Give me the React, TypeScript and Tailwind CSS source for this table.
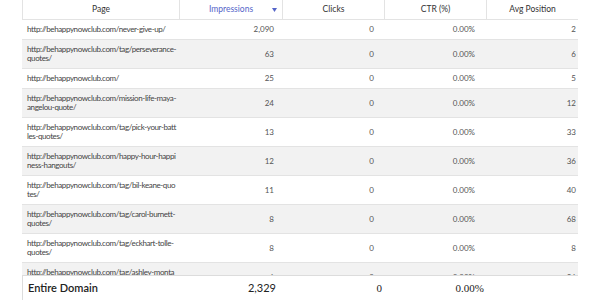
import React from 'react';

type Row = { page: string; impressions: string; clicks: string; ctr: string; pos: string };

const ROWS: Row[] = [
  { page: 'http://behappynowclub.com/never-give-up/', impressions: '2,090', clicks: '0', ctr: '0.00%', pos: '2' },
  { page: 'http://behappynowclub.com/tag/perseverance-quotes/', impressions: '63', clicks: '0', ctr: '0.00%', pos: '6' },
  { page: 'http://behappynowclub.com/', impressions: '25', clicks: '0', ctr: '0.00%', pos: '5' },
  { page: 'http://behappynowclub.com/mission-life-maya-angelou-quote/', impressions: '24', clicks: '0', ctr: '0.00%', pos: '12' },
  { page: 'http://behappynowclub.com/tag/pick-your-battles-quotes/', impressions: '13', clicks: '0', ctr: '0.00%', pos: '33' },
  { page: 'http://behappynowclub.com/happy-hour-happiness-hangouts/', impressions: '12', clicks: '0', ctr: '0.00%', pos: '36' },
  { page: 'http://behappynowclub.com/tag/bil-keane-quotes/', impressions: '11', clicks: '0', ctr: '0.00%', pos: '40' },
  { page: 'http://behappynowclub.com/tag/carol-burnett-quotes/', impressions: '8', clicks: '0', ctr: '0.00%', pos: '68' },
  { page: 'http://behappynowclub.com/tag/eckhart-tolle-quotes/', impressions: '8', clicks: '0', ctr: '0.00%', pos: '8' },
  { page: 'http://behappynowclub.com/tag/ashley-montagu-quotes/', impressions: '6', clicks: '0', ctr: '0.00%', pos: '26' },
];

const COLS = 'grid grid-cols-[158px_103px_102px_102px_91px]';

export default function App() {
  return (
    <div className="h-[300px] w-[600px] bg-white overflow-hidden" style={{ fontFamily: 'Lato, "Open Sans", sans-serif' }}>
      <div className="ml-[22px] w-[556px] h-full flex flex-col">
        {/* Header */}
        <div className={`${COLS} h-[20px] shrink-0 border-b border-[#e3e3e3] text-[8.5px] text-[#333]`}>
          <div className="flex items-center justify-center border-x border-[#e3e3e3]">Page</div>
          <div className="relative flex items-center justify-center border-r border-[#e3e3e3] text-[#5565c9]">
            Impressions
            <svg className="absolute right-[5px] top-[8px]" width="5" height="4" viewBox="0 0 5 4">
              <path d="M0 0h5L2.5 4z" fill="#5565c9" />
            </svg>
          </div>
          <div className="flex items-center justify-center border-r border-[#e3e3e3]">Clicks</div>
          <div className="flex items-center justify-center border-r border-[#e3e3e3]">CTR (%)</div>
          <div className="flex items-center justify-center">Avg Position</div>
        </div>

        {/* Body */}
        <div className="flex-1 min-h-0 overflow-hidden">
          {ROWS.map((r, i) => (
            <div
              key={i}
              className={`${COLS} border-b border-[#e3e3e3] text-[8px] leading-[9px] text-[#555] ${i % 2 === 1 ? 'bg-[#f2f2f2]' : 'bg-white'}`}
            >
              <div className="pl-[5px] pr-[2.5px] py-[5px] tracking-[-0.4px] leading-[9px] break-all text-[#444]">{r.page}</div>
              <div className="flex items-center justify-end pr-[9px]">{r.impressions}</div>
              <div className="flex items-center justify-end pr-[11px]">{r.clicks}</div>
              <div className="flex items-center justify-end pr-[12px]">{r.ctr}</div>
              <div className="flex items-center justify-end pr-[2px]">{r.pos}</div>
            </div>
          ))}
        </div>

        {/* Footer */}
        <div className={`${COLS} h-[25px] shrink-0 border-t border-[#dcdcdc] border-l text-[#222] bg-white`}>
          <div className="flex items-center pl-[5px] text-[11px] font-semibold">Entire Domain</div>
          <div className="flex items-center justify-end pr-[8px] text-[11px]">2,329</div>
          <div className="flex items-center justify-end pr-[4px] text-[11px]" style={{ fontFamily: '"Liberation Serif", serif' }}>0</div>
          <div className="flex items-center justify-end pr-[4px] text-[11px]" style={{ fontFamily: '"Liberation Serif", serif' }}>0.00%</div>
          <div />
        </div>
      </div>
    </div>
  );
}
